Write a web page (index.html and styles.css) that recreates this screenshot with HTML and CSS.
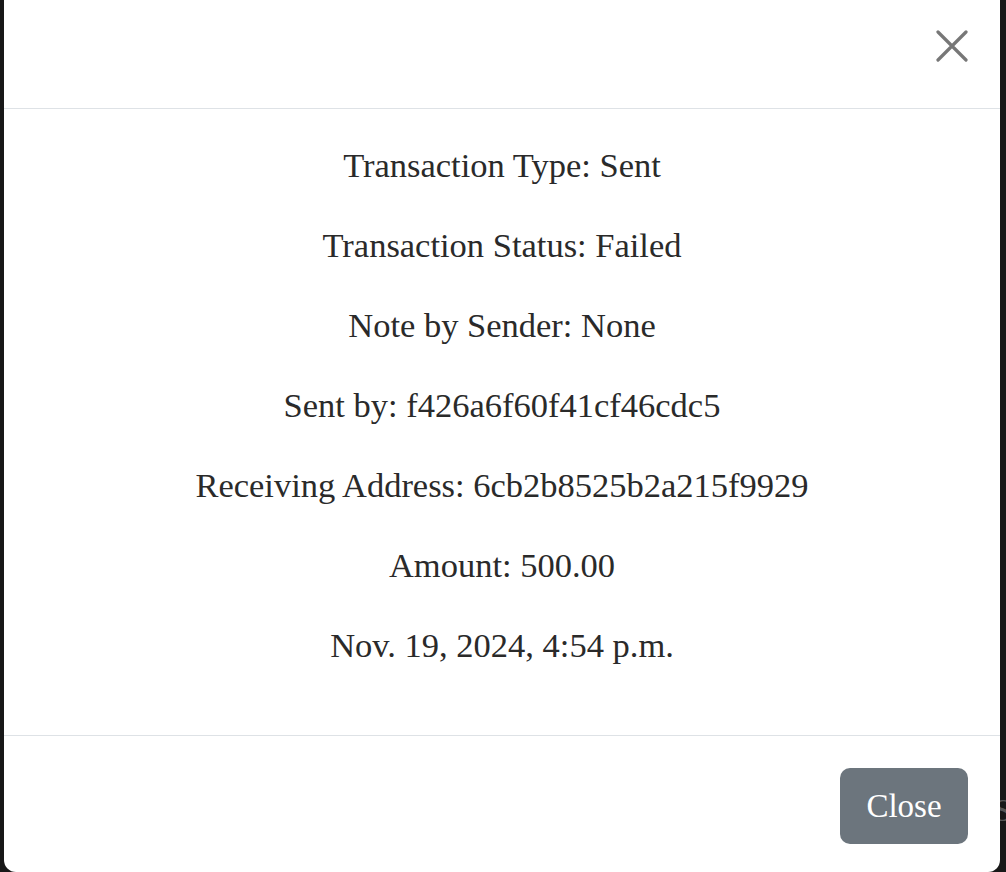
FILE: index.html
```html
<!DOCTYPE html>
<html lang="en">
<head>
<meta charset="utf-8">
<title>Transaction details</title>
<link rel="stylesheet" href="styles.css">
</head>
<body>
<div class="modal">
  <div class="modal-header">
    <button class="btn-close" aria-label="Close">
      <svg width="32" height="32" viewBox="0 0 32 32"><path d="M2 2L30 30M30 2L2 30" stroke="#777" stroke-width="3.2" stroke-linecap="round" fill="none"/></svg>
    </button>
  </div>
  <div class="modal-body">
    <p>Transaction Type: Sent</p>
    <p>Transaction Status: Failed</p>
    <p>Note by Sender: None</p>
    <p>Sent by: f426a6f60f41cf46cdc5</p>
    <p>Receiving Address: 6cb2b8525b2a215f9929</p>
    <p>Amount: 500.00</p>
    <p>Nov. 19, 2024, 4:54 p.m.</p>
  </div>
  <div class="modal-footer">
    <button class="btn-secondary">Close</button>
  </div>
</div>
<span class="behind">S</span>
</body>
</html>
```
FILE: styles.css
```css
html, body {
  margin: 0;
  height: 100%;
}
body {
  background: #181818;
  font-family: "Liberation Serif", "Times New Roman", serif;
  color: #212529;
  overflow: hidden;
  position: relative;
}
.modal {
  margin: 0 6px 0 4px;
  height: 872px;
  background: #fff;
  border-radius: 0 0 12px 12px;
  display: flex;
  flex-direction: column;
  position: relative;
  z-index: 1;
}
.modal-header {
  border-bottom: 1px solid #dee2e6;
  display: flex;
  justify-content: flex-end;
  align-items: center;
  padding: 0 32px 0 0;
  box-sizing: border-box;
  height: 109px;
}
.btn-close {
  background: none;
  border: 0;
  padding: 0;
  margin-top: -17px;
  width: 32px;
  height: 32px;
  cursor: pointer;
}
.btn-close svg { display: block; }
.modal-body {
  padding: 32px 0 66px;
  display: flex;
  flex-direction: column;
  align-items: center;
  gap: 32px;
  border-bottom: 1px solid #dee2e6;
}
.modal-body p {
  margin: 0;
  font-size: 34.5px;
  line-height: 48px;
  text-align: center;
  color: #2a2a2a;
}
.modal-footer {
  flex: 1;
  display: flex;
  justify-content: flex-end;
  align-items: flex-start;
  padding: 32px 32px 0 0;
}
.btn-secondary {
  width: 128px;
  height: 76px;
  background: #6c757d;
  color: #fff;
  border: 0;
  border-radius: 10px;
  font-family: "Liberation Serif", "Times New Roman", serif;
  font-size: 33px;
  padding: 0;
}
.behind {
  position: absolute;
  left: 994px;
  top: 792px;
  font-size: 32px;
  color: #555;
  z-index: 0;
}
```
